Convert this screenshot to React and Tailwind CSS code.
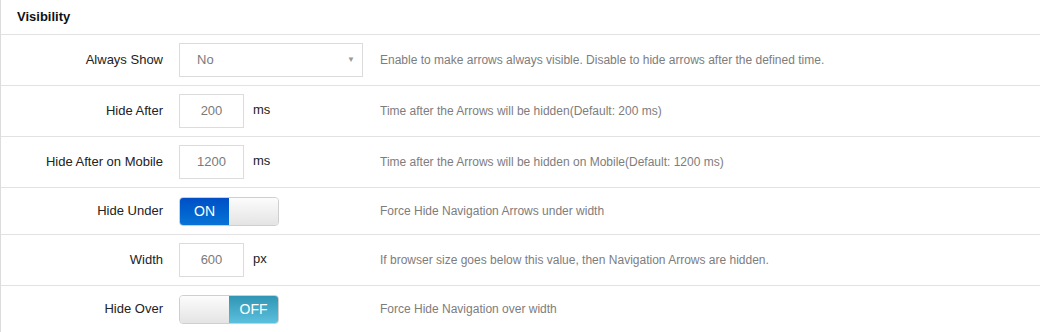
import React from "react";

function Toggle({ on }) {
  const onPart = (
    <div className="w-[50px] h-full flex items-center justify-center text-white text-[14px] bg-gradient-to-b from-[#004fc6] to-[#0a74d6]">
      ON
    </div>
  );
  const offPart = (
    <div className="w-[50px] h-full flex items-center justify-center text-white text-[14px] bg-gradient-to-b from-[#2f96b4] to-[#5bc0de]">
      OFF
    </div>
  );
  const blank = <div className="w-[50px] h-full bg-gradient-to-b from-[#fcfcfc] to-[#e4e4e4]" />;
  return (
    <div className="w-[100px] h-[29px] rounded-[4px] border border-[#cfcfcf] overflow-hidden flex shadow-[inset_0_1px_1px_rgba(0,0,0,0.05)]">
      {on ? (
        <>
          {onPart}
          {blank}
        </>
      ) : (
        <>
          {blank}
          {offPart}
        </>
      )}
    </div>
  );
}

function NumInput({ value, unit }) {
  return (
    <div className="flex items-center">
      <div className="w-[65px] h-[34px] border border-[#dcdcdc] flex items-center justify-center text-[13px] text-[#7a7a7a]">
        {value}
      </div>
      <span className="ml-[9px] text-[13px] text-[#222] -mt-[3px]">{unit}</span>
    </div>
  );
}

function Row({ label, control, desc, h }) {
  return (
    <div className={`flex items-center border-b border-[#e2e2e2] ${h}`}>
      <div className="w-[162px] text-right text-[13px] text-[#222]">{label}</div>
      <div className="w-[201px] ml-[16px] flex items-center">{control}</div>
      <div className="text-[12px] text-[#7d7d7d]">{desc}</div>
    </div>
  );
}

export default function App() {
  return (
    <div className="w-[1040px] h-[332px] overflow-hidden bg-white border-l border-[#dcdcdc] font-['Liberation_Sans',Arial,sans-serif]">
      <div className="h-[35px] border-b border-[#e2e2e2] flex items-center pl-[16px] text-[13px] font-bold text-[#111]">
        Visibility
      </div>
      <Row
        h="h-[51px]"
        label="Always Show"
        control={
          <div className="w-[184px] h-[34px] border border-[#dcdcdc] flex items-center justify-between pl-[17px] pr-[7px] text-[13px] text-[#7a7a7a]">
            <span>No</span>
            <span className="text-[8px] text-[#999]">▼</span>
          </div>
        }
        desc="Enable to make arrows always visible. Disable to hide arrows after the defined time."
      />
      <Row
        h="h-[51px]"
        label="Hide After"
        control={<NumInput value="200" unit="ms" />}
        desc="Time after the Arrows will be hidden(Default: 200 ms)"
      />
      <Row
        h="h-[51px]"
        label="Hide After on Mobile"
        control={<NumInput value="1200" unit="ms" />}
        desc="Time after the Arrows will be hidden on Mobile(Default: 1200 ms)"
      />
      <Row
        h="h-[47px]"
        label="Hide Under"
        control={<Toggle on />}
        desc="Force Hide Navigation Arrows under width"
      />
      <Row
        h="h-[51px]"
        label="Width"
        control={<NumInput value="600" unit="px" />}
        desc="If browser size goes below this value, then Navigation Arrows are hidden."
      />
      <Row
        h="h-[47px]"
        label="Hide Over"
        control={<Toggle on={false} />}
        desc="Force Hide Navigation over width"
      />
    </div>
  );
}
